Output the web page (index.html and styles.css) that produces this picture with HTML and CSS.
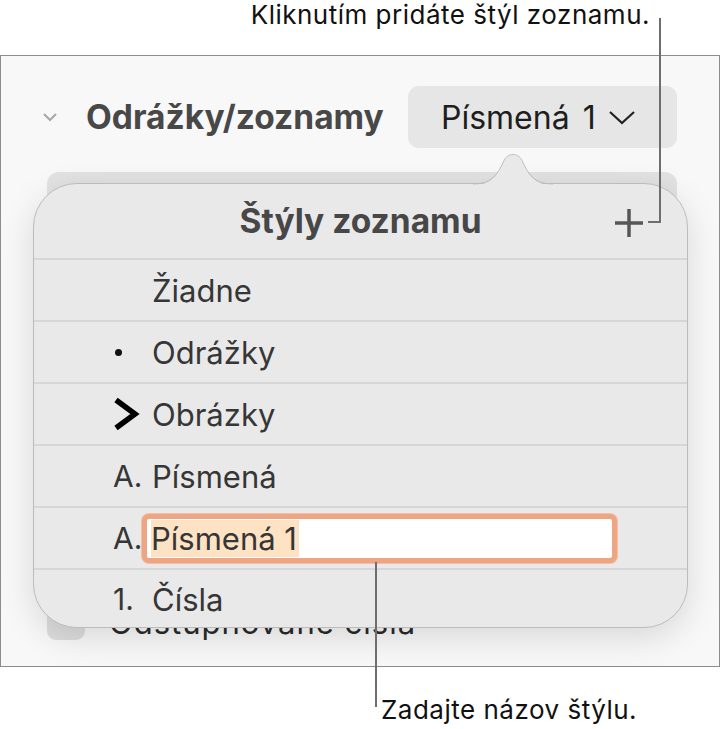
FILE: index.html
```html
<!DOCTYPE html>
<html lang="sk">
<head>
  <meta charset="UTF-8">
  <meta name="viewport" content="width=device-width, initial-scale=1.0">
  <title>Štýly zoznamu</title>
  <link rel="stylesheet" href="styles.css">
</head>
<body>
  <div class="page">
    <p class="callout callout-top">Kliknutím pridáte štýl zoznamu.</p>

    <div class="frame">
      <div class="section-head">
        <svg class="disclosure" width="16" height="10" viewBox="0 0 16 10">
          <polyline points="2,2 8,8 14,2" />
        </svg>
        <h2>Odrážky/zoznamy</h2>
        <div class="style-button">
          <span>Písmená 1</span>
          <svg width="28" height="16" viewBox="0 0 28 16">
            <polyline points="2,3 14,14 26,3" />
          </svg>
        </div>
      </div>

      <div class="control-box"></div>

      <div class="check-row">
        <span class="checkbox"></span>
        <span class="check-label">Odstupňované čísla</span>
      </div>

      <!-- popover over the inspector -->
      <div class="popover">
        <svg class="popover-arrow" width="80" height="32" viewBox="0 0 80 32">
          <path class="arrow-fill" d="M0 32 C 18 32, 24 24, 31 8 C 35 0, 45 0, 49 8 C 56 24, 62 32, 80 32 Z" />
          <path class="arrow-line" d="M0 31 C 18 31, 24 23, 31 7.5 C 35 -0.5, 45 -0.5, 49 7.5 C 56 23, 62 31, 80 31" />
        </svg>
        <div class="popover-head">
          <h3>Štýly zoznamu</h3>
          <svg class="plus" width="32" height="32" viewBox="0 0 32 32">
            <line x1="16" y1="2" x2="16" y2="30" />
            <line x1="2" y1="16" x2="30" y2="16" />
          </svg>
        </div>
        <ul class="styles-list">
          <li><span class="marker"></span><span class="label">Žiadne</span></li>
          <li><span class="marker"><span class="dot"></span></span><span class="label">Odrážky</span></li>
          <li>
            <span class="marker">
              <svg width="28" height="34" viewBox="0 0 28 34">
                <polyline points="3,3 22,17 3,31" />
              </svg>
            </span>
            <span class="label">Obrázky</span>
          </li>
          <li><span class="marker">A.</span><span class="label">Písmená</span></li>
          <li>
            <span class="marker">A.</span>
            <div class="name-field"><span class="selected">Písmená 1</span></div>
          </li>
          <li><span class="marker">1.</span><span class="label">Čísla</span></li>
        </ul>
      </div>
    </div>

    <p class="callout callout-bottom">Zadajte názov štýlu.</p>

    <div class="leader leader-top"></div>
    <div class="leader leader-top-tick"></div>
    <div class="leader leader-bottom"></div>
  </div>
</body>
</html>
```

FILE: styles.css
```css
* {
  box-sizing: border-box;
}

body {
  margin: 0;
  background-color: #ffffff;
  font-family: Inter, "Noto Sans", sans-serif;
  color: #333333;
}

.page {
  position: relative;
  width: 721px;
  height: 729px;
}

.callout {
  margin: 0;
  font-size: 26px;
  line-height: 30px;
  letter-spacing: 0.5px;
  color: #111111;
}

.callout-top {
  height: 55px;
  padding-right: 71px;
  text-align: right;
}

.callout-bottom {
  margin-top: 28px;
  padding-left: 381px;
}

.frame {
  position: relative;
  width: 720px;
  height: 612px;
  border: 1px solid #8c8c8c;
  background-color: #f8f8f8;
  display: flex;
  flex-direction: column;
}

.section-head {
  display: flex;
  align-items: center;
  margin-top: 30px;
  height: 62px;
  padding-left: 41px;
}

.disclosure {
  margin-right: 28px;
}

.disclosure polyline {
  fill: none;
  stroke: #a8a8a8;
  stroke-width: 2;
}

.section-head h2 {
  margin: 0;
  font-size: 33.5px;
  font-weight: 700;
  color: #484848;
}

.style-button {
  display: flex;
  align-items: center;
  gap: 12px;
  height: 62px;
  width: 269px;
  margin-left: auto;
  margin-right: 42px;
  padding-left: 33px;
  border-radius: 11px;
  background-color: #e6e6e6;
  font-size: 32px;
  word-spacing: 4px;
  color: #1e1e1e;
}

.style-button polyline {
  fill: none;
  stroke: #222222;
  stroke-width: 2.2;
}

.control-box {
  margin: 24px 42px 0 46px;
  height: 60px;
  border-radius: 12px;
  background-color: #e2e2e2;
}

.check-row {
  display: flex;
  align-items: flex-start;
  gap: 24px;
  margin-top: 370px;
  margin-left: 46px;
  height: 38px;
  font-size: 31px;
  color: #2a2a2a;
}

.checkbox {
  width: 38px;
  height: 38px;
  border-radius: 9px;
  background-color: #dddddd;
}

.check-label {
  line-height: 38px;
  margin-top: 2px;
  letter-spacing: 1px;
}

.popover {
  position: absolute;
  top: 127px;
  left: 32px;
  width: 655px;
  height: 445px;
  border: 1px solid #bcbcbc;
  border-radius: 44px;
  background-color: #e9e9e9;
  box-shadow: 0 10px 34px rgba(0, 0, 0, 0.13);
}

.popover-arrow {
  position: absolute;
  top: -31px;
  left: 439px;
}

.arrow-fill {
  fill: #e9e9e9;
}

.arrow-line {
  fill: none;
  stroke: #bcbcbc;
  stroke-width: 1;
}

.popover-head {
  position: relative;
  height: 74px;
  display: flex;
  align-items: center;
  justify-content: center;
}

.popover-head h3 {
  margin: 0;
  font-size: 33.5px;
  font-weight: 700;
  color: #474747;
}

.plus {
  position: absolute;
  right: 42px;
  top: 23px;
}

.plus line {
  stroke: #565656;
  stroke-width: 3.5;
}

.styles-list {
  list-style: none;
  margin: 0;
  padding: 0;
}

.styles-list li {
  display: flex;
  align-items: center;
  height: 62px;
  padding-left: 79px;
  border-top: 2px solid #d6d6d6;
  font-size: 31px;
  color: #363636;
}

.styles-list li:last-child {
  height: 60px;
}

.marker {
  display: flex;
  align-items: center;
  width: 29px;
  font-size: 30px;
  white-space: nowrap;
}

.marker polyline {
  fill: none;
  stroke: #000000;
  stroke-width: 5.5;
}

.dot {
  width: 7px;
  height: 7px;
  margin-left: 2px;
  border-radius: 50%;
  background-color: #111111;
}

.label {
  padding-left: 10px;
}

.name-field {
  width: 475px;
  height: 49px;
  display: flex;
  align-items: center;
  padding-left: 4px;
  border: 5px solid #eea583;
  border-radius: 7px;
  background-color: #ffffff;
  box-shadow: 0 0 0 1px #f2c0a6;
}

.selected {
  background-color: #fde2c4;
  padding-right: 2px;
}

.leader {
  position: absolute;
  background-color: #6e6e6e;
}

.leader-top {
  left: 659px;
  top: 18px;
  width: 1.5px;
  height: 205px;
}

.leader-top-tick {
  left: 648px;
  top: 221px;
  width: 12px;
  height: 1.5px;
}

.leader-bottom {
  left: 375px;
  top: 562px;
  width: 1.5px;
  height: 145px;
}
```
